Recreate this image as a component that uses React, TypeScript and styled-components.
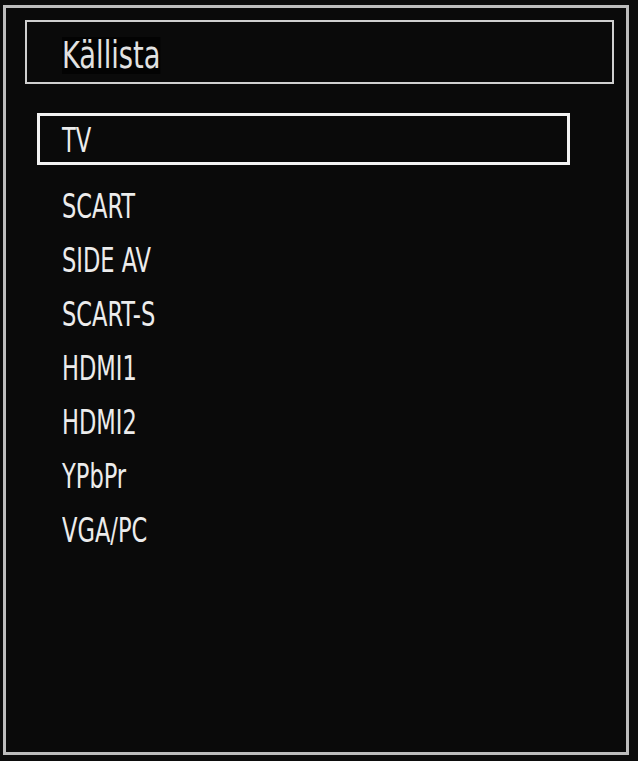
import styled, { createGlobalStyle } from "styled-components";

const sources = ["TV", "SCART", "SIDE AV", "SCART-S", "HDMI1", "HDMI2", "YPbPr", "VGA/PC"];

export default function App() {
  return (
    <>
      <GlobalStyle />
      <Frame>
        <Header>
          <Title>Källista</Title>
        </Header>
        <SourceList>
          {sources.map((name, i) => (
            <SourceItem key={name} $selected={i === 0}>
              <Label>{name}</Label>
            </SourceItem>
          ))}
        </SourceList>
      </Frame>
    </>
  );
}

const GlobalStyle = createGlobalStyle`
  html, body {
    margin: 0;
    padding: 0;
    background: #0c0c0c;
  }
  body {
    font-family: "DejaVu Sans Condensed", "DejaVu Sans", sans-serif;
    font-stretch: condensed;
  }
`;

const Frame = styled.div`
  box-sizing: border-box;
  width: 626px;
  height: 750px;
  margin: 5px 0 0 3px;
  border: 3px solid #bdbdbd;
  background: #0a0a0a;
  padding: 12px 12px 0 19px;
  display: flex;
  flex-direction: column;
`;

const Header = styled.div`
  box-sizing: border-box;
  height: 64px;
  border: 2px solid #cfcfcf;
  display: flex;
  align-items: center;
  padding: 6px 0 0 35px;
`;

const Title = styled.span`
  display: inline-block;
  color: #e2e2e2;
  font-size: 37px;
  line-height: 1;
  background: #030303;
  transform: scaleX(0.82);
  transform-origin: left center;
`;

const SourceList = styled.ul`
  list-style: none;
  margin: 29px 0 0 12px;
  padding: 0;
  width: 533px;
  display: flex;
  flex-direction: column;
`;

const SourceItem = styled.li<{ $selected?: boolean }>`
  box-sizing: border-box;
  height: 52px;
  border: 3px solid ${(p) => (p.$selected ? "#f2f2f2" : "transparent")};
  margin-bottom: ${(p) => (p.$selected ? "14px" : "2px")};
  padding: 2px 0 0 22px;
  display: flex;
  align-items: center;
`;

const Label = styled.span`
  display: inline-block;
  color: #ececec;
  font-size: 33px;
  line-height: 1;
  transform: scaleX(0.76);
  transform-origin: left center;
`;
